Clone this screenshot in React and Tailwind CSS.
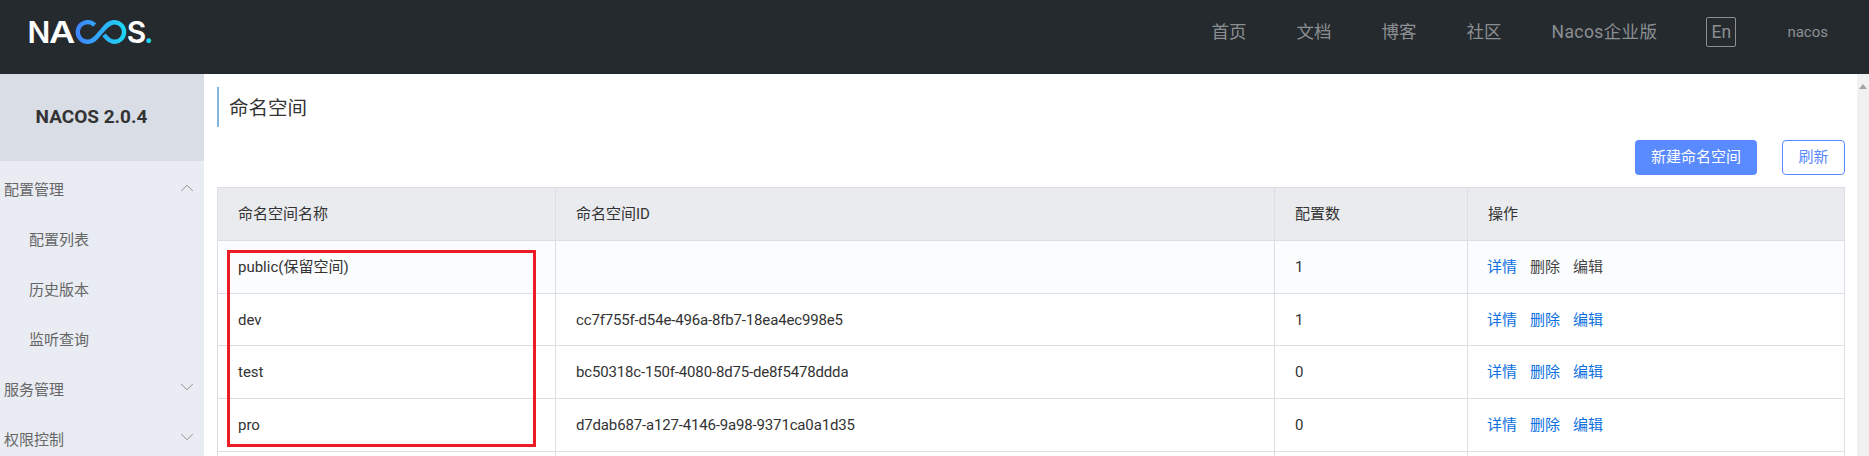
import { ChevronDown, ChevronUp } from "lucide-react";

const navItems = ["首页", "文档", "博客", "社区"];

const rows = [
    { name: "public(保留空间)", id: "", count: 1, reserved: true },
    { name: "dev", id: "cc7f755f-d54e-496a-8fb7-18ea4ec998e5", count: 1 },
    { name: "test", id: "bc50318c-150f-4080-8d75-de8f5478ddda", count: 0 },
    { name: "pro", id: "d7dab687-a127-4146-9a98-9371ca0a1d35", count: 0 },
];

const rowHeights = ["h-[53px]", "h-[52px]", "h-[53px]", "h-[53px]"];
const gridCols = "grid grid-cols-[338px_719px_193px_1fr]";

function Logo() {
    return (
        <div className="flex items-center pl-[29px] font-['Inter',sans-serif] text-[30px] font-semibold leading-none text-white">
            <span className="flex w-[20px] justify-center">N</span>
            <span className="flex w-[26px] scale-x-[1.2] justify-center">A</span>
            <svg width="53" height="24" viewBox="0 0 54 24" fill="none">
                <defs>
                    <linearGradient id="logoLoop" x1="0" y1="0" x2="1" y2="0">
                        <stop offset="0" stopColor="#3f86ff" />
                        <stop offset="1" stopColor="#1fd3f4" />
                    </linearGradient>
                </defs>
                <path
                    d="M20 5 A10 10 0 1 0 13 22 C19 22 22 17 26.5 12 C31 7 34 2 40 2 A10 10 0 1 1 40 22 C35 22 32 18 29.5 15"
                    stroke="url(#logoLoop)"
                    strokeWidth="4.5"
                />
            </svg>
            <span className="flex w-[17px] justify-center">S</span>
            <span className="-ml-[1px] text-[#1fd3f4]">.</span>
        </div>
    );
}

function Header() {
    return (
        <header className="flex h-[74px] shrink-0 items-center justify-between bg-[#252a2f] pb-[10px]">
            <Logo />
            <nav className="flex items-center pr-[41px] text-[#8c8f92]">
                <div className="flex gap-[50px] text-[17.5px]">
                    {navItems.map((item) => (
                        <span key={item}>{item}</span>
                    ))}
                    <span className="tracking-[0.4px]">Nacos企业版</span>
                </div>
                <span className="ml-[49px] flex h-[30px] w-[30px] items-center justify-center rounded-[2px] border border-[#8c8f92] text-[17.5px]">
                    En
                </span>
                <span className="ml-[51px] text-[15px]">nacos</span>
            </nav>
        </header>
    );
}

function MenuItem({ label, sub, open, arrow }) {
    return (
        <div className={`flex h-[50px] items-center justify-between pr-[6px] text-[15px] text-[#666] ${sub ? "pl-[29px]" : "pl-[4px]"}`}>
            <span>{label}</span>
            {arrow &&
                (open ? (
                    <ChevronUp size={22} strokeWidth={1} className="-mt-[4px] text-[#888]" />
                ) : (
                    <ChevronDown size={22} strokeWidth={1} className="-mt-[6px] text-[#888]" />
                ))}
        </div>
    );
}

function Sidebar() {
    return (
        <aside className="w-[204px] shrink-0 bg-[#e9ecf2]">
            <div className="flex h-[87px] items-center justify-center bg-[#d8dde6] pr-[21px] text-[19px] font-bold text-[#333]">
                NACOS 2.0.4
            </div>
            <div className="pt-[4px]">
                <MenuItem label="配置管理" arrow open />
                <MenuItem label="配置列表" sub />
                <MenuItem label="历史版本" sub />
                <MenuItem label="监听查询" sub />
                <MenuItem label="服务管理" arrow />
                <MenuItem label="权限控制" arrow />
            </div>
        </aside>
    );
}

function Actions({ reserved }) {
    const muted = reserved ? "text-[#444]" : "text-[#0a6fdf]";
    return (
        <div className="-ml-[1px] flex gap-[13px]">
            <span className="text-[#0a6fdf]">详情</span>
            <span className={muted}>删除</span>
            <span className={muted}>编辑</span>
        </div>
    );
}

function Table() {
    const cell = "flex items-center border-r border-[#dcdee3] pl-[20px] last:border-r-0";
    return (
        <div className="relative border-x border-t border-[#dcdee3] text-[15px] text-[#333]">
            <div className={`${gridCols} h-[53px] border-b border-[#dcdee3] bg-[#eaebef]`}>
                <div className={cell}>命名空间名称</div>
                <div className={cell}>命名空间ID</div>
                <div className={cell}>配置数</div>
                <div className={cell}>操作</div>
            </div>
            {rows.map((row, i) => (
                <div
                    key={row.name}
                    className={`${gridCols} ${rowHeights[i]} border-b border-[#dcdee3] ${row.reserved ? "bg-[#fbfcfe]" : "bg-white"}`}
                >
                    <div className={`${cell} pt-[1px]`}>{row.name}</div>
                    <div className={`${cell} pt-[1px] tracking-[-0.16px]`}>{row.id}</div>
                    <div className={`${cell} pt-[1px]`}>{row.count}</div>
                    <div className={`${cell} pt-[1px]`}>
                        <Actions reserved={row.reserved} />
                    </div>
                </div>
            ))}
            <div className={`${gridCols} h-[20px]`}>
                <div className={cell} />
                <div className={cell} />
                <div className={cell} />
                <div className={cell} />
            </div>
            {/* red annotation box */}
            <div className="absolute left-[9px] top-[62px] h-[197px] w-[309px] border-[3px] border-[#ed1c24]" />
        </div>
    );
}

export default function App() {
    return (
        <div className="flex h-[456px] w-[1869px] flex-col overflow-hidden bg-white font-['Roboto','Noto_Sans_CJK_SC',sans-serif]">
            <Header />
            <div className="flex min-h-0 flex-1">
                <Sidebar />
                <main className="min-w-0 flex-1 pl-[13px] pr-[12px] pt-[13px]">
                    <div className="flex h-[40px] items-center border-l-2 border-[#85b6dd] pl-[10px] pt-[3px] text-[19.5px] text-[#333]">
                        命名空间
                    </div>
                    <div className="mt-[13px] flex justify-end gap-[25px] text-[15px]">
                        <button className="flex h-[35px] w-[122px] items-center justify-center rounded-[4px] bg-[#5a8aff] text-white">
                            新建命名空间
                        </button>
                        <button className="flex h-[35px] w-[63px] items-center justify-center rounded-[4px] border border-[#5a8aff] text-[#5a8aff]">
                            刷新
                        </button>
                    </div>
                    <div className="mt-[12px]">
                        <Table />
                    </div>
                </main>
                <div className="flex w-[12px] shrink-0 justify-center bg-[#f1f1f1] pt-[10px]">
                    <svg width="8" height="5" viewBox="0 0 8 5">
                        <polygon points="4,0 8,5 0,5" fill="#a3a3a3" />
                    </svg>
                </div>
            </div>
        </div>
    );
}
